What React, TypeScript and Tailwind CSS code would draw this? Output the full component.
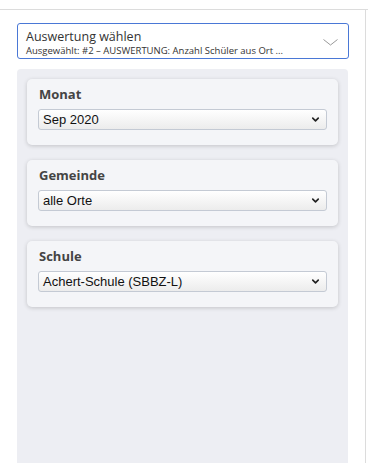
import { ChevronDown } from "lucide-react";

type FilterProps = {
  label: string;
  value: string;
};

function FilterCard({ label, value }: FilterProps) {
  return (
    <div className="rounded-[5px] bg-[#f4f5f8] px-[11px] pb-[15px] pt-[6px] shadow-[0_1px_4px_rgba(0,0,0,0.18)]">
      <div className="pl-px font-['Open_Sans',sans-serif] text-[13px] font-bold leading-[19px] text-[#444]">
        {label}
      </div>
      <div className="mt-[5px] flex h-[21px] items-center justify-between rounded-[3px] border border-[#c4cad4] bg-gradient-to-b from-white to-[#ececec] pl-[4px] pr-[5px]">
        <span className="font-['Liberation_Sans',Arial,sans-serif] text-[13px] leading-none text-[#111]">
          {value}
        </span>
        <ChevronDown size={11} strokeWidth={3.5} className="text-[#222]" />
      </div>
    </div>
  );
}

export default function App() {
  return (
    <div className="h-[463px] w-[368px] overflow-hidden bg-white pt-[9px]">
      <div className="h-full border-t border-[#dcdcdc]">
        <div className="h-full w-[366px] border-r border-[#dcdcdc] pl-[17px] pt-[13px]">
          <div className="relative h-[36px] w-[332px] overflow-hidden rounded-[3px] border border-[#4a78d6] pl-[8px] pt-[5px]">
            <div className="font-['Open_Sans',sans-serif] text-[12.5px] leading-[16px] text-[#333]">
              Auswertung wählen
            </div>
            <div className="font-['Open_Sans',sans-serif] text-[9.5px] leading-[11px] text-[#333]">
              Ausgewählt: #2 – AUSWERTUNG: Anzahl Schüler aus Ort ...
            </div>
            <div className="font-['Open_Sans',sans-serif] text-[9.5px] leading-[11px] text-[#333]">
              bezogen je Schule
            </div>
            <svg
              className="absolute right-[10px] top-[15px]"
              width="15"
              height="7"
              viewBox="0 0 15 7"
              fill="none"
            >
              <polyline points="0.5,0.5 7.5,6 14.5,0.5" stroke="#999" strokeWidth="1" />
            </svg>
          </div>
          <div className="mt-[10px] flex h-[400px] w-[331px] flex-col gap-[15px] rounded-[4px] bg-[#edeef3] p-[10px]">
            <FilterCard label="Monat" value="Sep 2020" />
            <FilterCard label="Gemeinde" value="alle Orte" />
            <FilterCard label="Schule" value="Achert-Schule (SBBZ-L)" />
          </div>
        </div>
      </div>
    </div>
  );
}
